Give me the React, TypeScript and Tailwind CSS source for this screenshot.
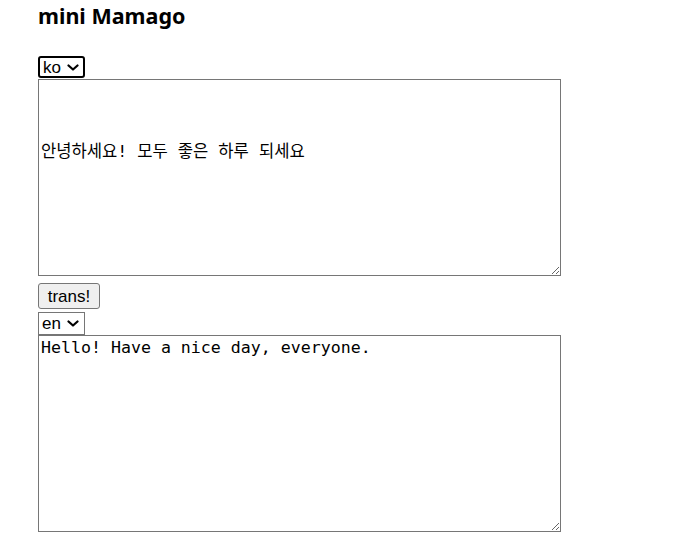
import React, { useState } from 'react'

const mono = "font-['DejaVu_Sans_Mono','Noto_Sans_CJK_KR',monospace]"

function Chevron() {
  return (
    <svg
      aria-hidden="true"
      className="pointer-events-none absolute right-[6px] top-[8px] h-[7px] w-[12px]"
      viewBox="0 0 12 7"
      fill="none"
      stroke="black"
      strokeWidth="2.2"
      strokeLinecap="round"
      strokeLinejoin="round"
    >
      <path d="M1.5 1.5l4.5 4l4.5-4" />
    </svg>
  )
}

interface LangSelectProps {
  value: string
  onChange: (v: string) => void
  focused?: boolean
  className?: string
}

function LangSelect({ value, onChange, focused, className }: LangSelectProps) {
  return (
    <div className={`relative ${className ?? ''}`}>
      <select
        value={value}
        onChange={(e) => onChange(e.target.value)}
        className={
          focused
            ? 'block h-[22px] w-[47px] appearance-none rounded-[3px] border-2 border-black bg-white pl-[3px] text-[17px] leading-none outline-none'
            : 'block h-[23px] w-[47px] appearance-none border border-[#767676] bg-white pl-[3px] text-[17px] leading-none'
        }
      >
        <option value="ko">ko</option>
        <option value="en">en</option>
      </select>
      <Chevron />
    </div>
  )
}

function App() {
  const [from, setFrom] = useState('ko')
  const [to, setTo] = useState('en')
  const [src, setSrc] = useState('\n\n\n안녕하세요! 모두 좋은 하루 되세요')
  const [dst, setDst] = useState('Hello! Have a nice day, everyone.')
  return (
    <div className="min-h-[542px] bg-white pl-[38px] font-['Liberation_Sans',sans-serif] text-black">
      <h1 className="pt-[2px] font-['Noto_Sans',sans-serif] text-[21.5px] font-bold leading-[28px]">
        mini Mamago
      </h1>
      <div className="mt-[26px] flex flex-col items-start">
        <LangSelect value={from} onChange={setFrom} focused />
        <textarea
          value={src}
          onChange={(e) => setSrc(e.target.value)}
          className={`mt-px block h-[197px] w-[523px] border border-[#767676] bg-white p-[2px] text-[16.6px] leading-[20px] ${mono}`}
        />
        <button className="mt-[7px] h-[26px] w-[62px] rounded-[3px] border border-[#767676] bg-[#efefef] text-[17px]">
          trans!
        </button>
        <LangSelect value={to} onChange={setTo} className="mt-[3px]" />
        <textarea
          value={dst}
          onChange={(e) => setDst(e.target.value)}
          className={`block h-[197px] w-[523px] border border-[#767676] bg-white p-[2px] text-[16.6px] leading-[20px] ${mono}`}
        />
      </div>
    </div>
  )
}

export default App
